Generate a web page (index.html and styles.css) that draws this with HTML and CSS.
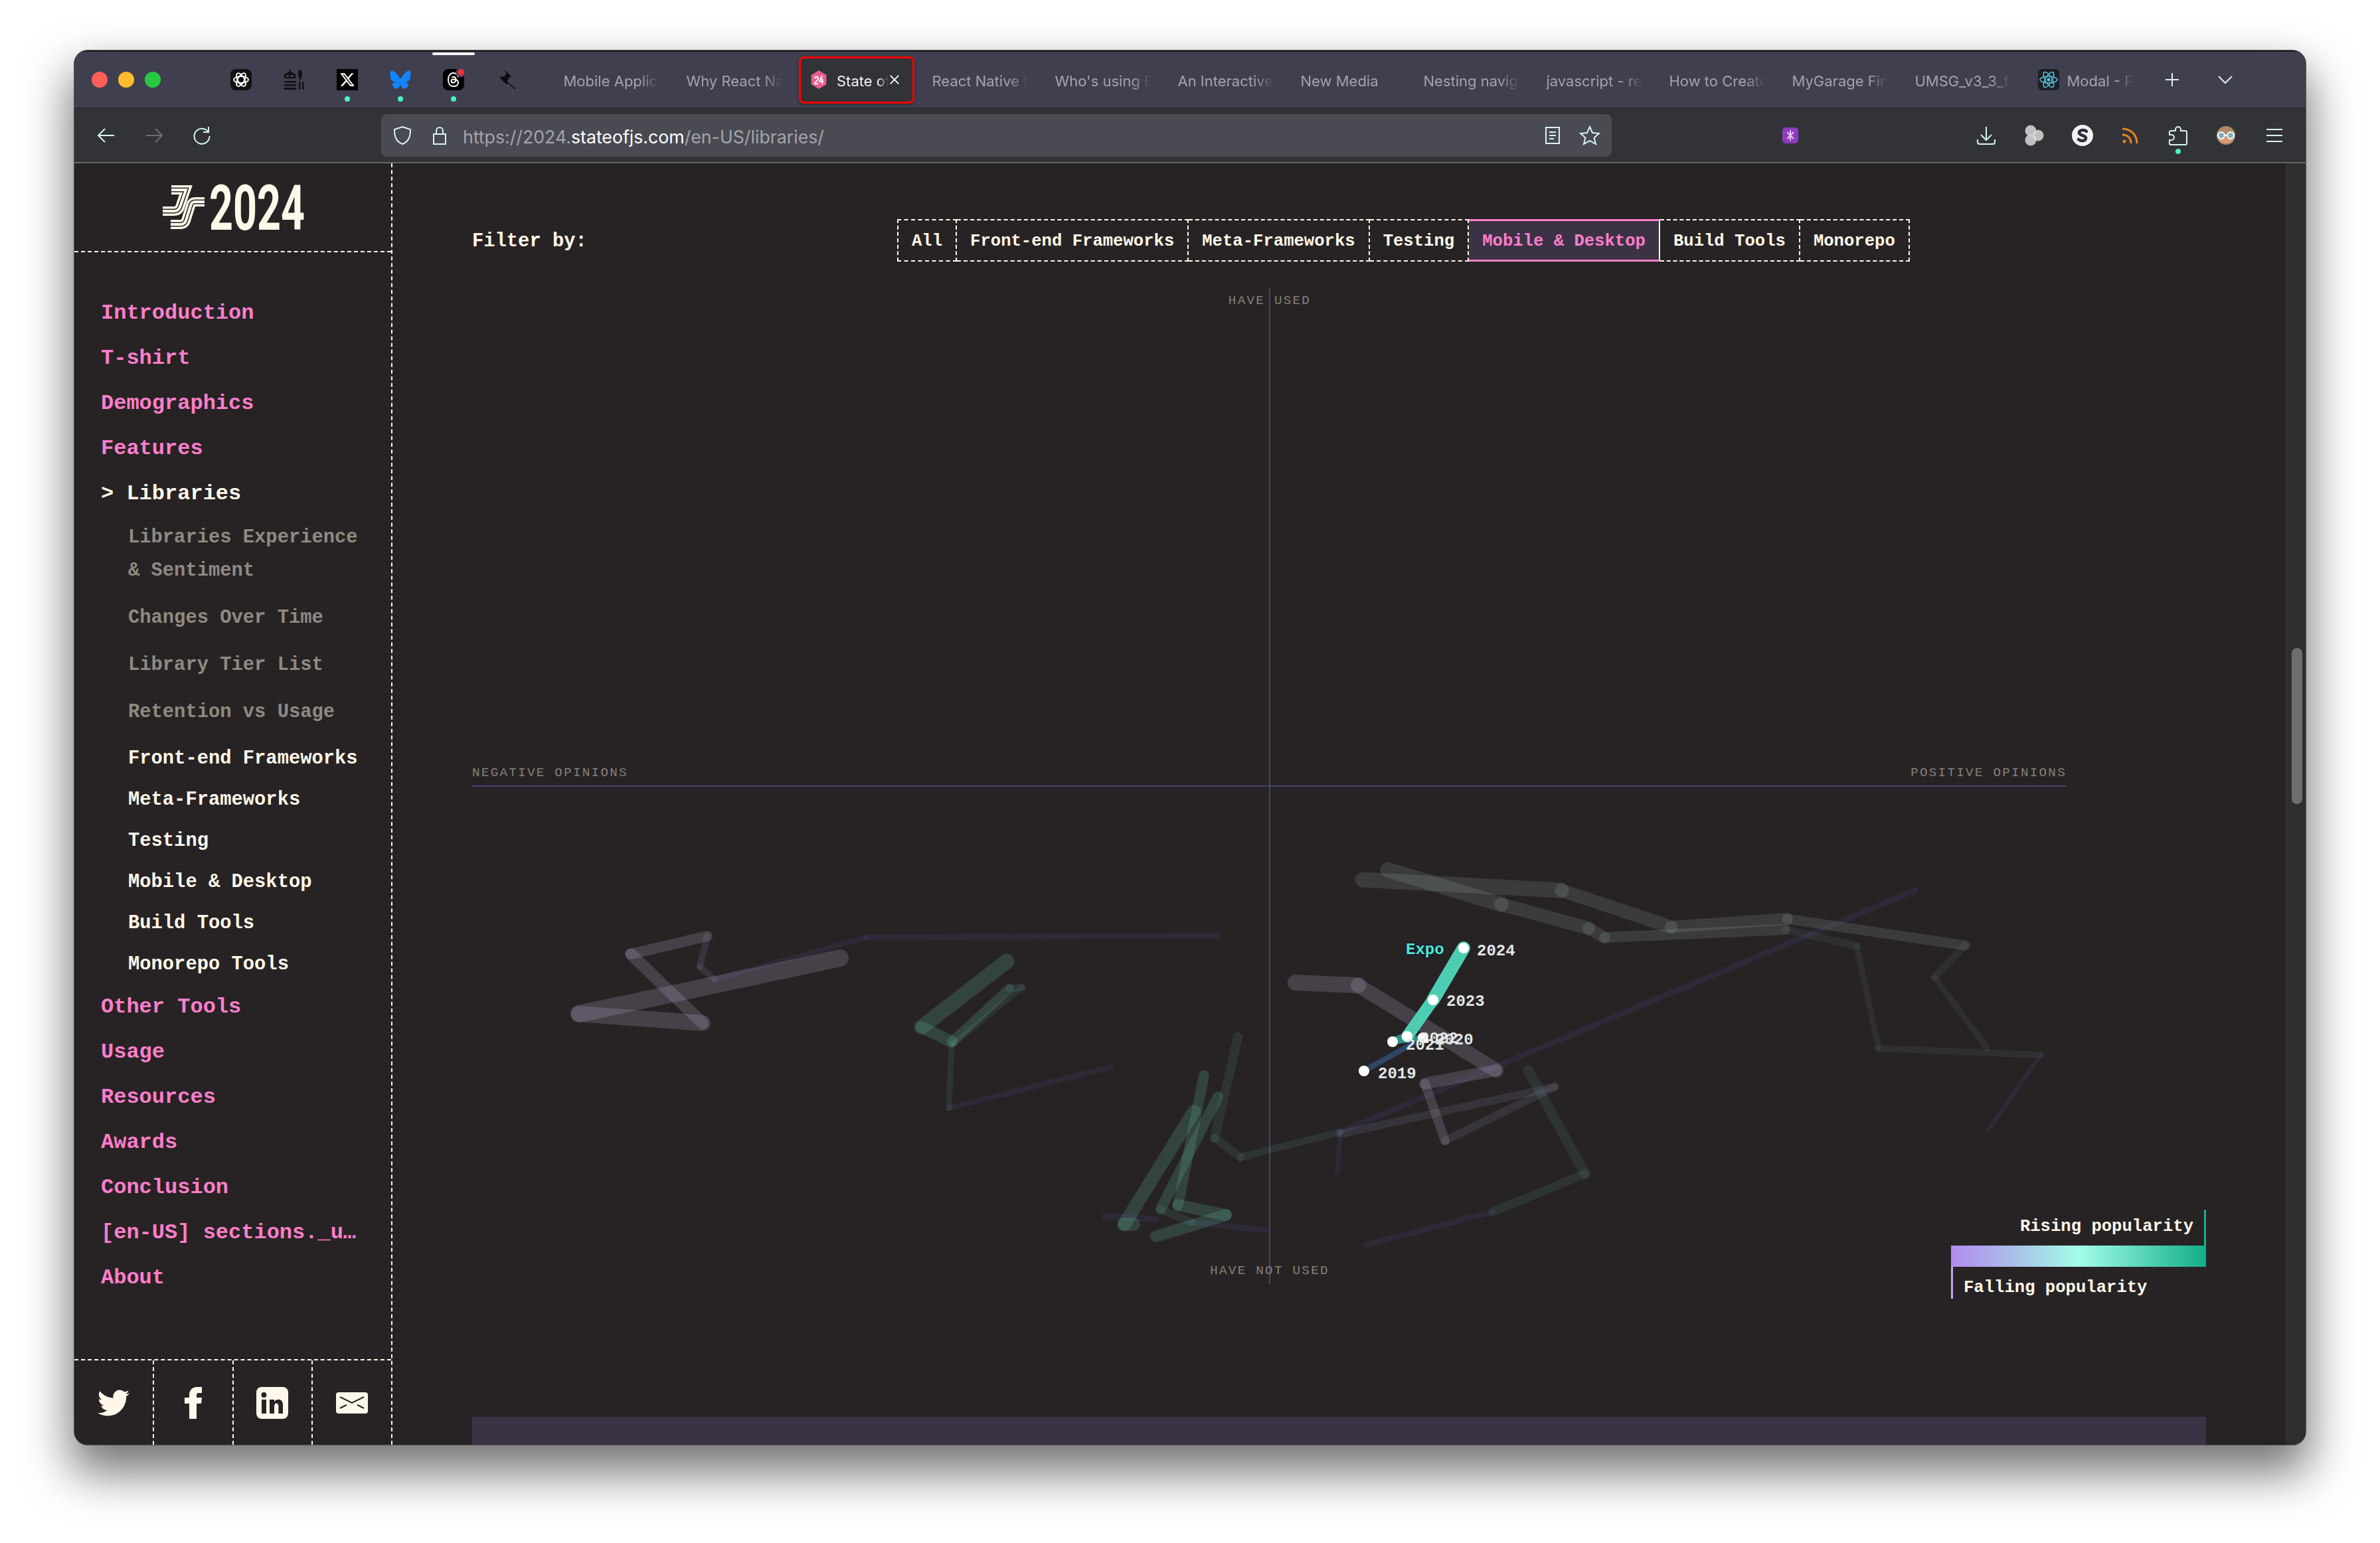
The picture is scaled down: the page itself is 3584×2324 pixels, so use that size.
FILE: index.html
```html
<!DOCTYPE html>
<html lang="en">
  <head>
    <meta charset="utf-8">
    <title>State of JS 2024: Libraries</title>
    <link rel="stylesheet" href="styles.css">
  </head>
  <body>
    <div class="window">
      <!-- tab strip -->
      <div class="tabbar">
        <div class="lights">
          <span class="light red"></span>
          <span class="light yellow"></span>
          <span class="light green"></span>
        </div>
        <div class="pinned">
          <div class="pin-tab">
            <svg class="pin-icon" viewBox="0 0 32 32">
              <rect width="32" height="32" rx="8" fill="#111"/>
              <g fill="none" stroke="#fff" stroke-width="1.800">
                <ellipse cx="16" cy="16" rx="11" ry="5"/>
                <ellipse cx="16" cy="16" rx="11" ry="5" transform="rotate(60 16 16)"/>
                <ellipse cx="16" cy="16" rx="11" ry="5" transform="rotate(120 16 16)"/>
              </g>
            </svg>
          </div>
          <div class="pin-tab">
            <svg class="pin-icon" viewBox="0 0 32 32">
              <path d="M1 14V8l8-4V1h2v3l7 4v6z" fill="#111"/>
              <path d="M4 9h11v3H4z" fill="#403f50"/>
              <path d="M9 7v6" stroke="#111" stroke-width="2"/>
              <path d="M25 1c2 0 3 3 3 6s-1 6-2 7v3h-2v-3c-1-1-2-4-2-7s1-6 3-6z" fill="#111"/>
              <path d="M1 18h18v2.500H1zM1 23h18v2.500H1zM1 28h18V31H1zM23 19h2.500v12H23zM28 19h2.500v12H28z" fill="#111"/>
            </svg>
          </div>
          <div class="pin-tab">
            <svg class="pin-icon" viewBox="0 0 32 32">
              <rect width="32" height="32" fill="#000"/>
              <path transform="translate(4 4)" fill="#fff" d="M18.244 2.250h3.308l-7.227 8.260 8.502 11.240H16.170l-5.214-6.817L4.990 21.750H1.680l7.730-8.835L1.254 2.250H8.080l4.713 6.231zm-1.161 17.520h1.833L7.084 4.126H5.117z"/>
            </svg>
            <span class="tab-dot"></span>
          </div>
          <div class="pin-tab">
            <svg class="pin-icon" viewBox="0 0 600 530">
              <path fill="#1185fe" d="M135.720 44.030C202.216 93.951 273.740 195.170 300 249.490c26.262-54.316 97.782-155.540 164.280-205.460C512.260 8.009 590-19.862 590 68.825c0 17.712-10.155 148.790-16.111 170.070-20.703 73.984-96.144 92.854-163.250 81.433 117.300 19.964 147.140 86.092 82.697 152.220-122.390 125.590-175.910-31.511-189.630-71.766-2.514-7.380-3.690-10.832-3.708-7.896-.017-2.936-1.193.516-3.707 7.896-13.714 40.255-67.233 197.360-189.630 71.766-64.444-66.128-34.605-132.260 82.697-152.220-67.108 11.421-142.550-7.450-163.250-81.433C20.150 217.613 9.997 86.535 9.997 68.825c0-88.687 77.742-60.816 125.720-24.795z"/>
            </svg>
            <span class="tab-dot"></span>
          </div>
          <div class="pin-tab pin-tab-playing">
            <svg class="pin-icon" viewBox="0 0 32 32">
              <rect width="32" height="32" rx="8" fill="#000"/>
              <path d="M23 12c-1-4-3.500-6-7-6-5 0-8 4-8 10s3 10 8 10c4.500 0 7-2.500 7-5.500 0-4-4-5.500-8-5-3 .4-3.500 4.500 0 5 3 .4 4.500-2 4.500-5.500 0-3-4-4.500-6-2" fill="none" stroke="#fff" stroke-width="2"/>
              <circle cx="27" cy="5" r="7.500" fill="#403f50"/>
              <circle cx="27" cy="5" r="5" fill="#f0323c"/>
            </svg>
            <span class="tab-dot"></span>
          </div>
          <div class="pin-tab">
            <svg class="pin-icon" viewBox="0 0 32 32">
              <path d="M12 1l11 10-2.500 1-3.500 5 .5 4-2 2-10-10 2.500-2 4.500.5 3-5z" fill="#0c0c0e"/>
              <path d="M15 18l14 12" stroke="#0c0c0e" stroke-width="1.500"/>
            </svg>
          </div>
        </div>
        <div class="tab"><span class="tab-title">Mobile Applications</span></div>
        <div class="tab"><span class="tab-title">Why React Native</span></div>
        <div class="tab tab-active">
          <svg class="tab-favicon" viewBox="0 0 32 32">
            <path d="M16 0l13 8v16l-13 8-13-8V8z" fill="#e8608f"/>
            <path d="M9 14c0-4 6-4 6 0 0 3-6 6-6 9h6M22 9l-5 10h7M22 14v9" fill="none" stroke="#fff" stroke-width="2.200"/>
          </svg>
          <span class="tab-title tab-title-short">State of JS</span>
          <svg class="tab-close" viewBox="0 0 20 20"><path d="M3 3l14 14M17 3L3 17"/></svg>
        </div>
        <div class="tab"><span class="tab-title">React Native for</span></div>
        <div class="tab"><span class="tab-title">Who's using Expo</span></div>
        <div class="tab"><span class="tab-title">An Interactive Guide</span></div>
        <div class="tab"><span class="tab-title">New Media</span></div>
        <div class="tab"><span class="tab-title">Nesting navigators</span></div>
        <div class="tab"><span class="tab-title">javascript - react</span></div>
        <div class="tab"><span class="tab-title">How to Create a</span></div>
        <div class="tab"><span class="tab-title">MyGarage Finder</span></div>
        <div class="tab"><span class="tab-title">UMSG_v3_3_final</span></div>
        <div class="tab">
          <svg class="tab-favicon tab-favicon-dark" viewBox="0 0 32 32">
            <rect width="32" height="32" rx="6" fill="#1b1f24"/>
            <g fill="none" stroke="#58c4dc" stroke-width="1.500">
              <ellipse cx="16" cy="16" rx="13" ry="5"/>
              <ellipse cx="16" cy="16" rx="13" ry="5" transform="rotate(60 16 16)"/>
              <ellipse cx="16" cy="16" rx="13" ry="5" transform="rotate(120 16 16)"/>
            </g>
            <circle cx="16" cy="16" r="2.500" fill="#58c4dc"/>
          </svg>
          <span class="tab-title tab-title-short">Modal - React</span>
        </div>
        <svg class="strip-btn strip-plus" viewBox="0 0 24 24"><path d="M12 2v20M2 12h20"/></svg>
        <svg class="strip-btn strip-more" viewBox="0 0 24 24"><path d="M2 7l10 10L22 7"/></svg>
      </div>

      <!-- toolbar -->
      <div class="toolbar">
        <div class="nav-buttons">
          <svg class="tool-icon" viewBox="0 0 32 32"><path d="M28 16H5M14 6L4 16l10 10"/></svg>
          <svg class="tool-icon tool-icon-off" viewBox="0 0 32 32"><path d="M4 16h23M18 6l10 10-10 10"/></svg>
          <svg class="tool-icon" viewBox="0 0 32 32"><path d="M25 10a11.500 11.500 0 1 0 2.500 7M26 3v8h-8"/></svg>
        </div>
        <div class="urlbar">
          <svg class="tool-icon" viewBox="0 0 32 32"><path d="M16 3l12 4c0 10-2 18-12 22C6 25 4 17 4 7z"/></svg>
          <svg class="tool-icon" viewBox="0 0 32 32"><path d="M7 14h18v15H7zM11 14V9a5 5 0 0 1 10 0v5"/></svg>
          <span class="url">https://2024.<b>stateofjs.com</b>/en-US/libraries/</span>
          <svg class="tool-icon url-reader" viewBox="0 0 32 32"><path d="M6 4h20v24H6zM11 11h10M11 16h10M11 21h7"/></svg>
          <svg class="tool-icon url-star" viewBox="0 0 32 32"><path d="M16 3l4 9 10 1-7.500 6.500L25 29l-9-5-9 5 2.500-9.500L2 13l10-1z"/></svg>
        </div>
        <svg class="ext-icon" viewBox="0 0 24 24">
          <rect width="24" height="24" rx="5" fill="#8e3bc0"/>
          <path d="M7 7l10 10M17 7L7 17M12 4v16" fill="none" stroke="#e6c8f4" stroke-width="2"/>
        </svg>
        <div class="tool-right">
          <svg class="tool-icon" viewBox="0 0 32 32"><path d="M16 3v20M8 15l8 8 8-8M3 22v4a3 3 0 0 0 3 3h20a3 3 0 0 0 3-3v-4"/></svg>
          <svg class="tool-icon" viewBox="0 0 32 32">
            <g fill="#e4e4e4" fill-opacity="0.800" stroke="#c8c8c8" stroke-width="1">
              <circle cx="11" cy="9" r="8"/>
              <circle cx="11" cy="23" r="8"/>
              <circle cx="22" cy="16" r="8"/>
            </g>
          </svg>
          <svg class="tool-icon" viewBox="0 0 32 32"><circle cx="16" cy="16" r="16" fill="#f2f2f2" stroke="none"/><path d="M22 10c-2-3-11-3-11 2 0 5 10 3 10 8 0 5-8 5-11 2" stroke="#2e2c3c" stroke-width="4.500" stroke-linecap="round" fill="none"/></svg>
          <svg class="tool-icon tool-rss" viewBox="0 0 32 32"><circle cx="7" cy="25" r="2.500" fill="#e8821e" stroke="none"/><path d="M4 15c8 0 13 5 13 13M4 6c13 0 22 9 22 22"/></svg>
          <div class="tool-badge">
            <svg class="tool-icon" viewBox="0 0 32 32"><path d="M12 9V7a4 4 0 0 1 8 0v2h7a2 2 0 0 1 2 2v17a2 2 0 0 1-2 2H5a2 2 0 0 1-2-2v-5h3a4 4 0 0 0 0-8H3v-4a2 2 0 0 1 2-2z"/></svg>
            <span class="tab-dot"></span>
          </div>
          <svg class="tool-icon" viewBox="0 0 32 32">
            <circle cx="16" cy="16" r="14" fill="#b08a68" stroke="none"/>
            <path d="M5 20c2 10 20 10 22 0z" fill="#dd9a78" stroke="none"/>
            <circle cx="9" cy="16" r="5" fill="#7fb0bc" stroke="#fff" stroke-width="2"/>
            <circle cx="23" cy="16" r="5" fill="#7fb0bc" stroke="#fff" stroke-width="2"/>
            <path d="M14 16h4" stroke="#fff" stroke-width="2"/>
          </svg>
          <svg class="tool-icon" viewBox="0 0 32 32"><path d="M4 7h24M4 16h24M4 25h24"/></svg>
        </div>
      </div>

      <div class="page">
        <aside class="sidebar">
          <div class="logo">
            <svg class="logo-svg" viewBox="0 0 216 68">
              <g class="logo-mark">
                <path d="M14 7H36L28 30Q26 39 18 39H1"/>
                <path class="band-gap" d="M14 7H36L28 30Q26 39 18 39H1"/>
                <path class="band-core" d="M14 7H36L28 30Q26 39 18 39H1"/>
                <path d="M64 25H50Q44 25 43 31L37 50Q35 59 28 59H13"/>
                <path class="band-gap" d="M64 25H50Q44 25 43 31L37 50Q35 59 28 59H13"/>
                <path class="band-core" d="M64 25H50Q44 25 43 31L37 50Q35 59 28 59H13"/>
              </g>
              <text class="logo-year" x="71" y="67" textLength="144" lengthAdjust="spacingAndGlyphs">2024</text>
            </svg>
          </div>
          <nav class="side-nav">
            <a class="nav-item">Introduction</a>
            <a class="nav-item">T-shirt</a>
            <a class="nav-item">Demographics</a>
            <a class="nav-item">Features</a>
            <a class="nav-item nav-current">&gt; Libraries</a>
            <div class="sub-list">
              <a class="sub-item sub-muted">Libraries Experience &amp; Sentiment</a>
              <a class="sub-item sub-muted">Changes Over Time</a>
              <a class="sub-item sub-muted">Library Tier List</a>
              <a class="sub-item sub-muted">Retention vs Usage</a>
            </div>
            <div class="sub-list sub-list-tight">
              <a class="sub-item">Front-end Frameworks</a>
              <a class="sub-item">Meta-Frameworks</a>
              <a class="sub-item">Testing</a>
              <a class="sub-item">Mobile &amp; Desktop</a>
              <a class="sub-item">Build Tools</a>
              <a class="sub-item">Monorepo Tools</a>
            </div>
            <a class="nav-item">Other Tools</a>
            <a class="nav-item">Usage</a>
            <a class="nav-item">Resources</a>
            <a class="nav-item">Awards</a>
            <a class="nav-item">Conclusion</a>
            <a class="nav-item">[en-US] sections._u…</a>
            <a class="nav-item">About</a>
          </nav>
          <div class="socials">
            <div class="social">
              <svg class="social-icon" viewBox="0 0 24 24"><path d="M23.953 4.570a10 10 0 01-2.825.775 4.958 4.958 0 002.163-2.723c-.951.555-2.005.959-3.127 1.184a4.920 4.920 0 00-8.384 4.482C7.690 8.095 4.067 6.130 1.640 3.162a4.822 4.822 0 00-.666 2.475c0 1.710.870 3.213 2.188 4.096a4.904 4.904 0 01-2.228-.616v.060a4.923 4.923 0 003.946 4.827 4.996 4.996 0 01-2.212.085 4.936 4.936 0 004.604 3.417 9.867 9.867 0 01-6.102 2.105c-.390 0-.779-.023-1.170-.067a13.995 13.995 0 007.557 2.209c9.053 0 13.998-7.496 13.998-13.985 0-.210 0-.420-.015-.630A9.935 9.935 0 0024 4.590z"/></svg>
            </div>
            <div class="social">
              <svg class="social-icon" viewBox="0 0 24 24"><path d="M14.500 8V6c0-1 .6-1.500 1.500-1.500h2.500V0H15c-4 0-6 2.500-6 6v2H5.500v4.500H9V24h5.500V12.500H18l.5-4.500z"/></svg>
            </div>
            <div class="social">
              <svg class="social-icon" viewBox="0 0 24 24"><path fill-rule="evenodd" d="M4 0h16a4 4 0 0 1 4 4v16a4 4 0 0 1-4 4H4a4 4 0 0 1-4-4V4a4 4 0 0 1 4-4zM4 9.500V20h3.500V9.500zM5.700 4a2 2 0 1 0 0 4 2 2 0 0 0 0-4zM10 9.500V20h3.500v-5.500c0-3 3.200-3 3.200 0V20H20v-6.500c0-5-5-5-6.500-2.300V9.500z"/></svg>
            </div>
            <div class="social">
              <svg class="social-icon" viewBox="0 0 24 24"><path d="M2 4h20a2 2 0 0 1 2 2v12a2 2 0 0 1-2 2H2a2 2 0 0 1-2-2V6a2 2 0 0 1 2-2z"/><path class="mail-flap" d="M3 7.500l9 4.500 9-4.500M3 16l5-2.500M21 16l-5-2.500"/></svg>
            </div>
          </div>
        </aside>

        <main class="content">
          <div class="filters">
            <span class="filter-label">Filter by:</span>
            <div class="filter-group">
              <button class="filter-btn">All</button>
              <button class="filter-btn">Front-end Frameworks</button>
              <button class="filter-btn">Meta-Frameworks</button>
              <button class="filter-btn">Testing</button>
              <button class="filter-btn filter-on">Mobile &amp; Desktop</button>
              <button class="filter-btn">Build Tools</button>
              <button class="filter-btn">Monorepo</button>
            </div>
          </div>

          <div class="chart">
            <!-- viewBox uses the screen coordinates of the plot -->
            <svg class="chart-svg" viewBox="711 420 2611 1540">
              <path class="axis" d="M1912 434V1934M711 1184H3112"/>
              <text class="axis-label" x="1912" y="458" text-anchor="middle">HAVE USED</text>
              <text class="axis-label" x="711" y="1169">NEGATIVE OPINIONS</text>
              <text class="axis-label" x="3112" y="1169" text-anchor="end">POSITIVE OPINIONS</text>
              <text class="axis-label" x="1912" y="1919" text-anchor="middle">HAVE NOT USED</text>

              <g class="seg seg-navy">
                <path stroke-width="9" d="M1305 1412L1835 1409"/>
                <path stroke-width="8" d="M1076 1475L1305 1412"/>
                <path stroke-width="8" d="M1429 1669L1673 1607"/>
                <path stroke-width="9" d="M2884 1341L2018 1705"/>
                <path stroke-width="7" d="M2018 1705L2014 1766"/>
                <path stroke-width="9" d="M1794 1841L1908 1853"/>
                <path stroke-width="10" d="M1664 1832L1741 1836"/>
                <path stroke-width="9" d="M2248 1825L2057 1875"/>
                <path stroke-width="7" d="M3073 1589L2993 1703"/>
              </g>
              <g class="seg seg-purple">
                <path stroke-width="26" d="M1265 1443L872 1527"/>
                <path stroke-width="24" d="M872 1527L1058 1541"/>
                <path stroke-width="18" d="M1058 1541L950 1437"/>
                <path stroke-width="16" d="M950 1437L1065 1410"/>
                <path class="dim" stroke-width="10" d="M1065 1410L1054 1456"/>
                <path class="dim" stroke-width="9" d="M1054 1456L1076 1475"/>
                <path stroke-width="24" d="M1951 1480L2045 1484"/>
                <path stroke-width="22" d="M2045 1484L2253 1612"/>
                <path stroke-width="18" d="M2253 1612L2146 1632"/>
                <path stroke-width="14" d="M2146 1632L2176 1718"/>
                <path class="dim" stroke-width="12" d="M2176 1718L2341 1637"/>
                <path class="dim" stroke-width="12" d="M2341 1637L2018 1708"/>
              </g>
              <g class="seg seg-green">
                <path stroke-width="23" d="M1516 1448L1388 1547"/>
                <path stroke-width="18" d="M1388 1547L1433 1569"/>
                <path stroke-width="14" d="M1433 1569L1520 1489"/>
                <path class="dim" stroke-width="11" d="M1520 1489L1539 1487"/>
                <path class="dim" stroke-width="9" d="M1539 1487L1436 1572"/>
                <path class="dim" stroke-width="9" d="M1433 1572L1429 1669"/>
                <path class="dim" stroke-width="14" d="M1864 1562L1829 1714"/>
                <path class="dim" stroke-width="12" d="M1829 1714L1868 1743"/>
                <path class="dim" stroke-width="11" d="M1868 1743L2018 1705"/>
                <path stroke-width="16" d="M1813 1620L1774 1815"/>
                <path stroke-width="16" d="M1834 1652L1748 1821"/>
                <path stroke-width="20" d="M1798 1674L1693 1844"/>
                <path stroke-width="18" d="M1774 1815L1846 1830"/>
                <path stroke-width="18" d="M1846 1830L1741 1862"/>
                <path class="dim" stroke-width="12" d="M1748 1821L1794 1841"/>
                <path stroke-width="20" d="M1693 1844L1707 1844"/>
                <path class="dim" stroke-width="15" d="M2301 1612L2387 1768"/>
                <path class="dim" stroke-width="13" d="M2387 1768L2248 1825"/>
              </g>
              <g class="seg seg-gray">
                <path stroke-width="23" d="M2052 1325L2351 1341"/>
                <path stroke-width="20" d="M2351 1341L2516 1396"/>
                <path stroke-width="18" d="M2516 1396L2691 1384"/>
                <path stroke-width="15" d="M2691 1384L2959 1424"/>
                <path class="dim" stroke-width="11" d="M2959 1424L2913 1472"/>
                <path class="dim" stroke-width="9" d="M2913 1472L2993 1579"/>
                <path stroke-width="23" d="M2090 1310L2260 1362"/>
                <path stroke-width="20" d="M2260 1362L2392 1398"/>
                <path stroke-width="18" d="M2392 1398L2416 1412"/>
                <path stroke-width="16" d="M2416 1412L2688 1400"/>
                <path class="dim" stroke-width="12" d="M2688 1400L2796 1425"/>
                <path class="dim" stroke-width="9" d="M2796 1425L2829 1579"/>
                <path class="dim" stroke-width="10" d="M2829 1579L3073 1589"/>
              </g>

              <!-- the one library in focus -->
              <g class="seg">
                <path class="expo-old" stroke-width="8" d="M2054 1613L2143 1563"/>
                <path class="expo-mid" stroke-width="8" d="M2143 1563L2097 1569"/>
                <path class="expo-mid" stroke-width="12" d="M2097 1569L2119 1561"/>
                <path class="expo-new" stroke-width="18" d="M2119 1561L2158 1506"/>
                <path class="expo-new" stroke-width="20" d="M2158 1506L2204 1428"/>
              </g>
              <g class="dots">
                <circle cx="2054" cy="1613" r="8"/>
                <circle cx="2143" cy="1563" r="8"/>
                <circle cx="2097" cy="1569" r="8"/>
                <circle cx="2119" cy="1561" r="8"/>
                <circle cx="2158" cy="1506" r="8"/>
                <circle cx="2204" cy="1428" r="8"/>
              </g>
              <text class="year" x="2075" y="1624">2019</text>
              <text class="year" x="2161" y="1573">2020</text>
              <text class="year" x="2117" y="1581">2021</text>
              <text class="year" x="2138" y="1571">2022</text>
              <text class="year" x="2178" y="1515">2023</text>
              <text class="year" x="2224" y="1439">2024</text>
              <text class="lib-name" x="2117" y="1437">Expo</text>
            </svg>
            <div class="legend">
              <div class="legend-rise">Rising popularity</div>
              <div class="legend-bar"></div>
              <div class="legend-fall">Falling popularity</div>
            </div>
          </div>

          <div class="next-block"></div>
        </main>

        <div class="scrollbar"><div class="scroll-thumb"></div></div>
      </div>
    </div>
  </body>
</html>
```

FILE: styles.css
```css
html, body {
  margin: 0;
  padding: 0;
  background: #fff;
}

body {
  width: 3584px;
  height: 2324px;
  overflow: hidden;
  font-family: "Liberation Mono", monospace;
}

.window {
  width: 3360px;
  height: 2100px;
  margin: 76px 0 0 112px;
  display: flex;
  flex-direction: column;
  border-radius: 20px;
  overflow: hidden;
  background: #272324;
  box-shadow: 0 0 0 1px #555, 0 36px 70px 6px rgba(0, 0, 0, 0.55);
}

/* Tab strip */
.tabbar {
  flex: 0 0 88px;
  box-sizing: border-box;
  display: flex;
  align-items: center;
  position: relative;
  background: #403f50;
  border-top: 2px solid #1c1c20;
  border-bottom: 2px solid #2a2a30;
  font-family: Inter, sans-serif;
  font-size: 22px;
  color: #a3a3ad;
}

.lights {
  display: flex;
  gap: 16px;
  width: 211px;
  box-sizing: border-box;
  padding-left: 26px;
}

.light {
  width: 24px;
  height: 24px;
  border-radius: 50%;
}

.light.red { background: #ff5f57; }
.light.yellow { background: #febc2e; }
.light.green { background: #28c840; }

.pinned {
  display: flex;
  width: 510px;
}

.pin-tab {
  width: 80px;
  height: 84px;
  display: flex;
  align-items: center;
  justify-content: center;
  position: relative;
}

.pin-tab-playing::before {
  content: "";
  position: absolute;
  top: 1px;
  left: 8px;
  width: 64px;
  height: 4px;
  background: #fff;
  border-radius: 2px;
}

.pin-icon {
  width: 32px;
  height: 32px;
}

.tab-dot {
  position: absolute;
  left: 50%;
  bottom: 9px;
  width: 8px;
  height: 8px;
  margin-left: -4px;
  border-radius: 50%;
  background: #4cf2c0;
}

.tab {
  box-sizing: border-box;
  width: 174px;
  height: 71px;
  margin: 0 5.5px;
  padding: 0 10px;
  display: flex;
  align-items: center;
  flex: none;
}

.tab-title {
  width: 144px;
  padding-top: 4px;
  overflow: hidden;
  white-space: nowrap;
  -webkit-mask-image: linear-gradient(to right, #000 80%, transparent 100%);
  mask-image: linear-gradient(to right, #000 80%, transparent 100%);
}

.tab-title-short {
  width: 98px;
}

.tab-active {
  margin: 0 11px 0 0;
  border: 3px solid #f00;
  border-radius: 8px;
  background: #323337;
  padding: 0 8px 0 13px;
  color: #f0f4f6;
  box-shadow: 0 1px 4px rgba(0, 0, 0, 0.4);
}

.tab-active .tab-title {
  width: 78px;
  margin-left: 1px;
}

.tab-favicon {
  flex: none;
  width: 28px;
  height: 28px;
  margin-right: 12px;
}

.tab-favicon-dark {
  width: 32px;
  height: 32px;
}

.tab-close {
  flex: none;
  width: 18px;
  height: 18px;
  fill: none;
  stroke: #fff;
  stroke-width: 2;
}

.strip-btn {
  flex: none;
  fill: none;
  stroke: #e4eef0;
  stroke-width: 2;
}

.strip-plus {
  width: 24px;
  height: 24px;
  margin-left: 21px;
}

.strip-more {
  width: 24px;
  height: 24px;
  margin-left: 56px;
}

/* Toolbar */
.toolbar {
  flex: 0 0 82px;
  box-sizing: border-box;
  display: flex;
  align-items: center;
  background: #323337;
  border-bottom: 2px solid #66666c;
}

.tool-icon {
  flex: none;
  width: 32px;
  height: 32px;
  fill: none;
  stroke: #d8f4f8;
  stroke-width: 2;
}

.tool-icon-off {
  stroke: #6b7073;
}

.nav-buttons {
  width: 462px;
  box-sizing: border-box;
  padding-left: 32px;
  display: flex;
  gap: 40px;
}

.urlbar {
  width: 1853px;
  height: 64px;
  box-sizing: border-box;
  padding: 0 17px 0 16px;
  display: flex;
  align-items: center;
  gap: 24px;
  border-radius: 8px;
  background: #4a4a52;
  font-family: Inter, sans-serif;
  font-size: 26.700px;
  color: #a4a4ac;
}

.url {
  flex: 1;
  margin-left: -5px;
  padding-top: 3px;
  white-space: nowrap;
}

.url b {
  font-weight: 400;
  color: #fff;
}

.ext-icon {
  width: 24px;
  height: 24px;
  margin-left: 257px;
}

.tool-right {
  display: flex;
  gap: 40.300px;
  margin-left: 267px;
}

.tool-rss {
  stroke: #e8821e;
  stroke-width: 3;
}

.tool-badge {
  position: relative;
  display: flex;
}

.tool-badge .tab-dot {
  bottom: -12px;
}

/* Page area */
.page {
  flex: 1;
  min-height: 0;
  display: flex;
}

.sidebar {
  flex: 0 0 479px;
  box-sizing: border-box;
  display: flex;
  flex-direction: column;
  border-right: 2px dashed #fff8ea;
}

.logo {
  height: 134px;
  box-sizing: border-box;
  border-bottom: 2px dashed #fff8ea;
  padding: 33px 0 0 132px;
}

.logo-svg {
  display: block;
  width: 216px;
  height: 68px;
  overflow: visible;
}

/* one band, striped by the thinner strokes on top */
.logo-mark path {
  fill: none;
  stroke: #fff8ea;
  stroke-width: 14;
}

.logo-mark .band-gap {
  stroke: #272324;
  stroke-width: 7;
}

.logo-mark .band-core {
  stroke: #fff8ea;
  stroke-width: 4;
}

.logo-year {
  font-family: Roboto, sans-serif;
  font-weight: 700;
  font-size: 94px;
  fill: #fff8ea;
}

.side-nav {
  padding: 58px 0 0 40px;
  display: flex;
  flex-direction: column;
  font-weight: 700;
}

.nav-item {
  height: 68px;
  line-height: 68px;
  font-size: 32px;
  color: #ff7ecb;
  white-space: nowrap;
}

.nav-current {
  color: #fff8ea;
}

.sub-list {
  display: flex;
  flex-direction: column;
  gap: 21px;
  margin: 7px 0 14px 41px;
  width: 360px;
}

.sub-item {
  font-size: 28.800px;
  line-height: 50px;
  color: #fff8ea;
}

.sub-muted {
  color: #8f8a82;
}

.sub-list-tight {
  gap: 0;
  margin: 0 0 -1px 41px;
}

.sub-list-tight .sub-item {
  height: 62px;
  line-height: 62px;
}

.socials {
  margin-top: auto;
  height: 129px;
  box-sizing: border-box;
  display: flex;
  border-top: 2px dashed #fff8ea;
}

.social {
  flex: 1;
  display: flex;
  align-items: center;
  justify-content: center;
  border-right: 2px dashed #fff8ea;
}

.social:last-child {
  border-right: 0;
}

.social-icon {
  width: 48px;
  height: 48px;
  fill: #fff8ea;
}

.mail-flap {
  fill: none;
  stroke: #272324;
  stroke-width: 1;
}

/* Main column */
.content {
  flex: 1;
  min-width: 0;
  padding: 84px 0 0 120px;
  overflow: hidden;
}

.filters {
  display: flex;
  align-items: center;
  height: 64px;
  color: #fff8ea;
  font-weight: 700;
  font-size: 28.800px;
}

.filter-label {
  flex: 0 0 640px;
  padding-top: 3px;
}

.filter-group {
  display: flex;
  height: 64px;
}

.filter-btn {
  box-sizing: border-box;
  height: 64px;
  padding: 3px 20px 0;
  margin: 0;
  background: none;
  color: #fff8ea;
  font: inherit;
  font-size: 25.600px;
  border: 2px dashed #fff8ea;
  border-left: 0;
}

.filter-btn:first-child {
  border-left: 2px dashed #fff8ea;
}

.filter-on {
  background: #3b3345;
  color: #ff7ecb;
  border-top: 3px solid #ff7ecb;
  border-bottom: 3px solid #ff7ecb;
  border-right: 2px solid #fff8ea;
}

.chart {
  position: relative;
  width: 2611px;
  height: 1540px;
  margin-top: 26px;
}

.chart-svg {
  display: block;
  width: 2611px;
  height: 1540px;
}

.axis {
  fill: none;
  stroke: #44436e;
  stroke-width: 2;
}

.axis-label {
  font-size: 19.200px;
  letter-spacing: 2.300px;
  fill: #85807b;
}

.seg path {
  fill: none;
  stroke-linecap: round;
}

.seg-navy path { stroke: rgba(80, 80, 160, 0.15); }
.seg-purple path { stroke: rgba(216, 200, 240, 0.18); }
.seg-green path { stroke: rgba(110, 225, 195, 0.17); }
.seg-gray path { stroke: rgba(176, 200, 192, 0.15); }

.seg-purple .dim { stroke: rgba(190, 180, 240, 0.11); }
.seg-green .dim { stroke: rgba(110, 210, 195, 0.1); }
.seg-gray .dim { stroke: rgba(150, 180, 190, 0.08); }

.seg .expo-old { stroke: #2e4668; }
.seg .expo-mid { stroke: #2f8f86; }
.seg .expo-new { stroke: #4dcdb2; }

.dots circle {
  fill: #fff;
}

.year {
  font-size: 24px;
  font-weight: 700;
  fill: #e2e6e6;
}

.lib-name {
  font-size: 24px;
  font-weight: 700;
  fill: #4de8c8;
  paint-order: stroke;
  stroke: #1b1b30;
  stroke-width: 4px;
}

.legend {
  position: absolute;
  top: 1402px;
  right: 0;
  width: 384px;
  color: #fff8ea;
  font-size: 25.600px;
  font-weight: 700;
}

.legend-rise {
  height: 54px;
  line-height: 51px;
  box-sizing: border-box;
  text-align: right;
  padding-right: 16px;
  border-right: 3px solid #17b090;
}

.legend-bar {
  height: 32px;
  background: linear-gradient(to right, #b28bf0 0%, #a8cbe9 30%, #a4fde8 50%, #10ad8a 100%);
}

.legend-fall {
  height: 48px;
  line-height: 63px;
  box-sizing: border-box;
  padding-left: 16px;
  border-left: 3px solid #c5a6f5;
}

.next-block {
  width: 2611px;
  height: 60px;
  margin-top: 174px;
  background: #3b3345;
}

.scrollbar {
  flex: 0 0 30px;
  position: relative;
  background: #2f2f2f;
}

.scroll-thumb {
  position: absolute;
  top: 730px;
  left: 9px;
  width: 16px;
  height: 235px;
  border-radius: 8px;
  background: #6e6e6e;
}
```
